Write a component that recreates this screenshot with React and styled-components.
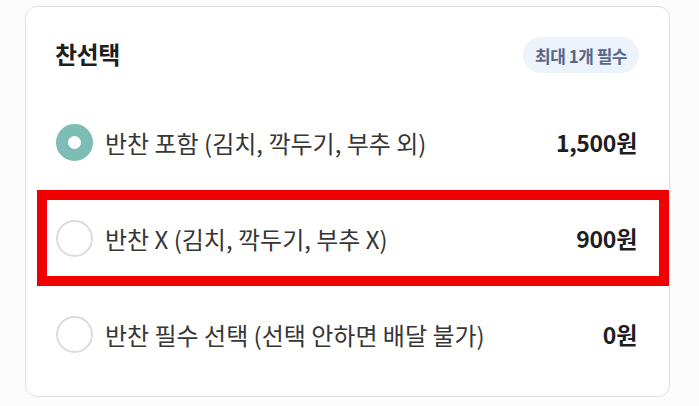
import React from "react";
import styled, { createGlobalStyle } from "styled-components";

const GlobalStyle = createGlobalStyle`
  html, body {
    margin: 0;
    padding: 0;
    background: #fcfcfc;
    font-family: "Noto Sans CJK KR", "Noto Sans", sans-serif;
  }
`;

const options = [
  { label: "반찬 포함 (김치, 깍두기, 부추 외)", price: "1,500원", checked: true },
  { label: "반찬 X (김치, 깍두기, 부추 X)", price: "900원", marked: true },
  { label: "반찬 필수 선택 (선택 안하면 배달 불가)", price: "0원" },
];

const App = () => {
  return (
    <Page>
      <GlobalStyle />
      <Card>
        <Header>
          <Title>찬선택</Title>
          <Badge>최대 1개 필수</Badge>
        </Header>
        <List>
          {options.map((o) => (
            <Row key={o.label} $marked={o.marked}>
              <Radio $checked={o.checked} />
              <Label>{o.label}</Label>
              <Price>{o.price}</Price>
            </Row>
          ))}
        </List>
      </Card>
    </Page>
  );
};

export default App;

const Page = styled.div`
  width: 699px;
  height: 406px;
  padding: 6px 29px 0 25px;
  box-sizing: border-box;
`;

const Card = styled.div`
  width: 645px;
  height: 391px;
  box-sizing: border-box;
  background: #ffffff;
  border: 1.5px solid #e0e0e0;
  border-radius: 12px;
  padding-top: 30px;
  display: flex;
  flex-direction: column;
`;

const Header = styled.div`
  height: 36px;
  margin: 0 30px 0 29px;
  display: flex;
  align-items: center;
  justify-content: space-between;
`;

const Title = styled.div`
  font-size: 24px;
  font-weight: 700;
  color: #1e1e1e;
  margin-top: -4px;
  letter-spacing: -0.5px;
`;

const Badge = styled.div`
  height: 36px;
  padding: 0 12px;
  border-radius: 18px;
  background: #edf3fa;
  color: #56678a;
  font-size: 17px;
  font-weight: 700;
  letter-spacing: -0.5px;
  display: flex;
  align-items: center;
`;

const List = styled.div`
  margin: 21px 0 0 11px;
  display: flex;
  flex-direction: column;
`;

const Row = styled.div`
  height: 96px;
  box-sizing: border-box;
  padding: 0 32px 0 19px;
  display: flex;
  align-items: center;
  outline: ${(p) => (p.$marked ? "10px solid #f00000" : "none")};
  outline-offset: -10px;
`;

const Radio = styled.span`
  width: 37px;
  height: 37px;
  box-sizing: border-box;
  border-radius: 50%;
  flex-shrink: 0;
  background: #ffffff;
  border: ${(p) => (p.$checked ? "12.5px solid #7dbdb6" : "2px solid #dcdcdc")};
`;

const Label = styled.span`
  margin-left: 12px;
  flex: 1;
  font-size: 24px;
  color: #363636;
`;

const Price = styled.span`
  font-size: 23px;
  font-weight: 700;
  color: #1e1e1e;
  letter-spacing: -0.3px;
`;
